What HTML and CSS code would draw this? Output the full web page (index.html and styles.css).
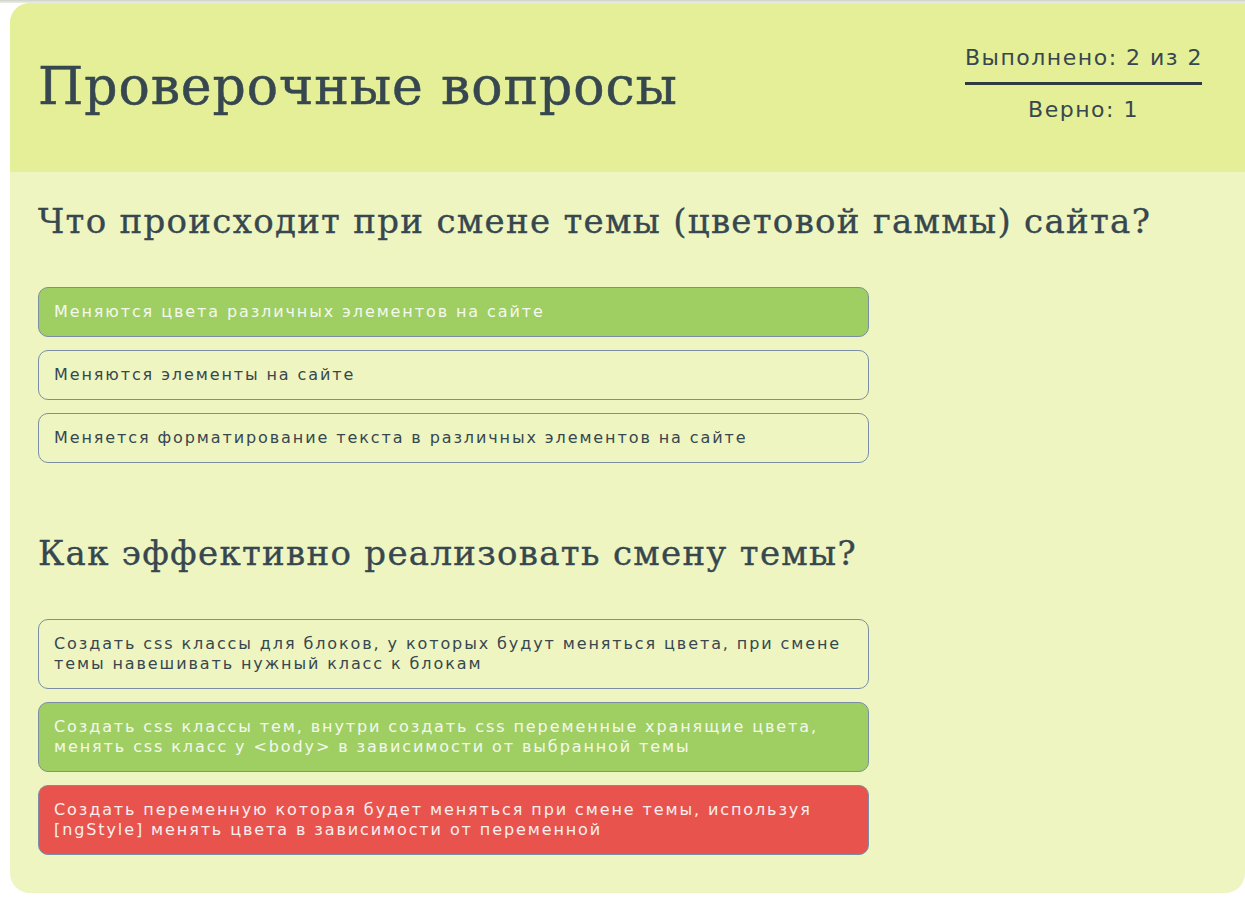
FILE: index.html
```html
<!DOCTYPE html>
<html lang="ru">
<head>
<meta charset="utf-8">
<title>Проверочные вопросы</title>
<link rel="stylesheet" href="styles.css">
</head>
<body>
<div class="topline"></div>
<main class="card">
  <header class="card-header">
    <h1 class="title">Проверочные вопросы</h1>
    <div class="stats">
      <div class="stats-done">Выполнено: 2 из 2</div>
      <div class="stats-right">Верно: 1</div>
    </div>
  </header>
  <section class="content">
    <div class="question">
      <h2 class="q-title">Что происходит при смене темы (цветовой гаммы) сайта?</h2>
      <ul class="options">
        <li class="option option-correct">Меняются цвета различных элементов на сайте</li>
        <li class="option">Меняются элементы на сайте</li>
        <li class="option">Меняется форматирование текста в различных элементов на сайте</li>
      </ul>
    </div>
    <div class="question">
      <h2 class="q-title">Как эффективно реализовать смену темы?</h2>
      <ul class="options">
        <li class="option">Создать css классы для блоков, у которых будут меняться цвета, при смене темы навешивать нужный класс к блокам</li>
        <li class="option option-correct">Создать css классы тем, внутри создать css переменные хранящие цвета, менять css класс у &lt;body&gt; в зависимости от выбранной темы</li>
        <li class="option option-wrong">Создать переменную которая будет меняться при смене темы, используя [ngStyle] менять цвета в зависимости от переменной</li>
      </ul>
    </div>
  </section>
</main>
</body>
</html>
```

FILE: styles.css
```css
* { box-sizing: border-box; }
html, body { margin: 0; padding: 0; }
body {
  background: #ffffff;
  color: #37474f;
  font-family: "DejaVu Sans", "Open Sans", sans-serif;
}
.topline {
  height: 3px;
  background: linear-gradient(#cfd2c8, #eef0e6);
}
.card {
  margin-left: 10px;
  width: 1235px;
  border-radius: 20px 0 20px 20px;
  overflow: hidden;
  background: #eef5c1;
}
.card-header {
  height: 169px;
  background: #e5ef97;
  display: flex;
  align-items: flex-start;
  justify-content: space-between;
  padding: 0 43px 0 28px;
}
.title {
  margin: 53px 0 0;
  font-family: "DejaVu Serif", serif;
  font-weight: normal;
  font-size: 52px;
  line-height: 60px;
  letter-spacing: 0.9px;
  color: #37474f;
  -webkit-text-stroke: 0.5px #37474f;
}
.stats {
  width: 237px;
  margin-top: 40px;
  text-align: center;
  font-size: 22px;
  letter-spacing: 1.5px;
  color: #37474f;
}
.stats-done {
  line-height: 30px;
  padding-bottom: 9px;
  border-bottom: 3px solid #2f3b3f;
  white-space: nowrap;
}
.stats-right {
  line-height: 30px;
  padding-top: 10px;
}
.content {
  padding: 27px 28px 38px;
}
.question + .question { margin-top: 68px; }
.q-title {
  margin: 0 0 44px;
  font-family: "DejaVu Serif", serif;
  font-weight: normal;
  font-size: 34px;
  line-height: 44px;
  letter-spacing: 1.3px;
  color: #37474f;
  -webkit-text-stroke: 0.35px #37474f;
}
.options {
  list-style: none;
  margin: 0;
  padding: 0;
  width: 831px;
  display: flex;
  flex-direction: column;
  gap: 13px;
}
.option {
  border: 1px solid #7b8ea3;
  border-radius: 10px;
  padding: 14px 15px;
  font-size: 16px;
  line-height: 20px;
  letter-spacing: 1.9px;
  color: #37474f;
}
.option-correct {
  background: #9fcf63;
  color: #f4f8ee;
}
.option-wrong {
  background: #e8544d;
  color: #fbeeee;
}
```
